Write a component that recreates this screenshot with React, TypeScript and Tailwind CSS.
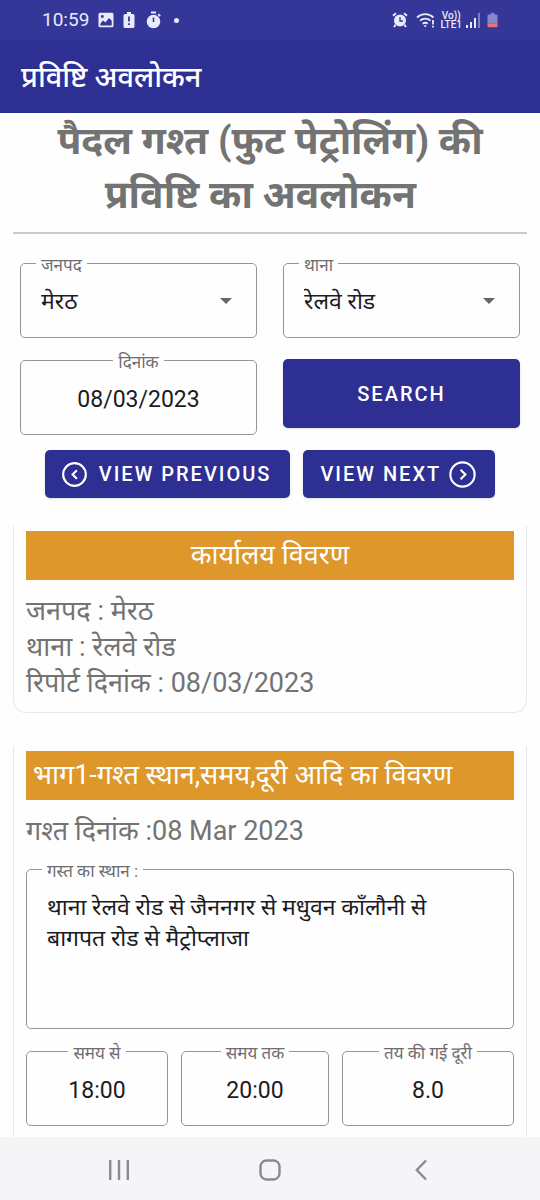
import type { ReactNode } from "react";

type OutlineProps = {
  id: string;
  label: string;
  centered?: boolean;
  children: ReactNode;
};

function Outline({ id, label, centered = false, children }: OutlineProps) {
  return (
    <fieldset className="relative min-w-0 rounded-[5px] border border-[#969498]">
      <legend
        className={
          centered
            ? "mx-auto h-4 px-[5px] text-[17px] leading-5 text-[#6f6d71]"
            : "ml-[15px] h-4 px-[5px] text-[17px] leading-5 text-[#6f6d71]"
        }
      >
        <label htmlFor={id}>{label}</label>
      </legend>
      {children}
    </fieldset>
  );
}

function SelectField({ id, label, value }: { id: string; label: string; value: string }) {
  return (
    <Outline id={id} label={label}>
      <select
        id={id}
        defaultValue={value}
        className="block h-[66px] w-full appearance-none bg-transparent pr-12 pb-1 pl-5 text-[23px] text-[#1c1b1f] outline-none"
      >
        <option value={value}>{value}</option>
      </select>
      <svg
        viewBox="0 0 12 6"
        className="pointer-events-none absolute top-[27px] right-6 h-[6px] w-3 fill-[#666]"
        aria-hidden="true"
      >
        <path d="M0 0h12L6 6z" />
      </svg>
    </Outline>
  );
}

function TextField({ id, label, value }: { id: string; label: string; value: string }) {
  return (
    <Outline id={id} label={label} centered>
      <input
        id={id}
        type="text"
        defaultValue={value}
        className="block h-[66px] w-full min-w-0 bg-transparent pb-1 text-center text-[23px] text-[#1c1b1f] outline-none"
      />
    </Outline>
  );
}

function StatusBar() {
  return (
    <div className="flex h-10 shrink-0 items-center justify-between bg-[#343698] px-[42px] text-[#e9eafc]">
      <div className="flex items-center">
        <span className="text-[19px]">10:59</span>
        <svg viewBox="0 0 16 16" className="ml-[9px] size-4" aria-hidden="true">
          <path
            fill="currentColor"
            fillRule="evenodd"
            d="M2 0.8h12a1.5 1.5 0 0 1 1.5 1.5v11.4a1.5 1.5 0 0 1-1.5 1.5H2a1.5 1.5 0 0 1-1.5-1.5V2.300A1.500 1.500 0 0 1 2 .8zM2.300 11.800v1.600h11.400V8.400L10.800 6 7.600 10.400 5 8.600zM3 3.200v2.600h2.600V3.200z"
          />
        </svg>
        <svg viewBox="0 0 12 16" className="ml-[9px] h-4 w-3" aria-hidden="true">
          <path fill="currentColor" d="M4 0h4v2h2a1.500 1.500 0 0 1 1.500 1.500v11A1.500 1.500 0 0 1 10 16H2a1.500 1.500 0 0 1-1.500-1.500v-11A1.500 1.500 0 0 1 2 2h2z" />
          <path stroke="#343698" strokeWidth="1.800" d="M6 4.500v5M6 11.300v1.800" />
        </svg>
        <svg viewBox="0 0 16 18" className="ml-[11px] h-[18px] w-4" aria-hidden="true">
          <circle cx="7.500" cy="10.500" r="6.800" fill="currentColor" />
          <path stroke="currentColor" strokeWidth="1.800" d="M5 1.500h5M12.200 3.200l2 2" fill="none" />
          <path stroke="#343698" strokeWidth="1.600" d="M7.500 6.500v4.500" />
        </svg>
        <span className="ml-3 size-[5px] rounded-full bg-[#e9eafc]" />
      </div>
      <div className="flex items-center">
        <svg viewBox="0 0 16 16" className="size-4" aria-hidden="true">
          <circle cx="8" cy="8.500" r="6" fill="currentColor" />
          <path stroke="currentColor" strokeWidth="2" fill="none" d="M1 3.800 4 1.200M15 3.800 12 1.200M3.500 12.800 2 15M12.500 12.800 14 15" />
          <path stroke="#343698" strokeWidth="1.300" fill="none" d="M8 5v4h3" />
        </svg>
        <svg viewBox="0 0 20 16" className="ml-2 h-4 w-5" fill="none" stroke="currentColor" strokeWidth="1.800" aria-hidden="true">
          <path d="M1 5.500a12 12 0 0 1 16.500 0M4 8.700a7.800 7.800 0 0 1 10.500 0M6.700 11.700a4 4 0 0 1 5 0" />
          <circle cx="9.200" cy="14" r="1.100" fill="currentColor" stroke="none" />
          <path d="M17 8v4.500M17 13.700v1.800" />
        </svg>
        <span className="ml-1 flex flex-col items-center text-[10px] leading-[9px] font-medium">
          <span>Vo))</span>
          <span>LTE1</span>
        </span>
        <svg viewBox="0 0 14 15" className="ml-1 h-[15px] w-[14px]" stroke="currentColor" strokeWidth="2" aria-hidden="true">
          <path d="M1 15v-3M5 15V9M9 15V5" />
          <path d="M13 15V0" opacity="0.400" />
        </svg>
        <svg viewBox="0 0 12 16" className="ml-[7px] h-4 w-[11px]" aria-hidden="true">
          <path fill="#8587c8" d="M4 0h4v2h2a1.500 1.500 0 0 1 1.500 1.500V12H.5V3.500A1.500 1.500 0 0 1 2 2h2z" />
          <path fill="#e8736f" d="M.5 12h11v2.500A1.500 1.500 0 0 1 10 16H2a1.500 1.500 0 0 1-1.500-1.500z" />
        </svg>
      </div>
    </div>
  );
}

const office = ["जनपद : मेरठ", "थाना : रेलवे रोड", "रिपोर्ट दिनांक : 08/03/2023"];

export default function App() {
  return (
    <div className="flex h-dvh flex-col bg-white font-[Roboto,'Noto_Sans_Devanagari','Noto_Sans',sans-serif]">
      <StatusBar />
      <header className="flex h-[73px] shrink-0 items-center bg-[#2d2f93] px-[21px]">
        <p className="text-[29px] leading-9 font-medium text-white">प्रविष्टि अवलोकन</p>
      </header>

      <main className="min-h-0 flex-1 overflow-y-auto bg-[#fefefe] px-[13px] pb-6 [scrollbar-width:none]">
        <h1 className="border-b-2 border-[#cbcbcb] pt-px pb-[10px] text-center text-[39px] leading-[54px] font-bold text-[#737373]">
          पैदल गश्त (फुट पेट्रोलिंग) की
          <br />
          प्रविष्टि का अवलोकन{"\u00a0\u00a0"}
        </h1>

        <form className="px-[7px] pt-[21px]" onSubmit={(e) => e.preventDefault()}>
          <div className="grid grid-cols-2 gap-x-[26px] gap-y-[14px]">
            <SelectField id="district" label="जनपद" value="मेरठ" />
            <SelectField id="station" label="थाना" value="रेलवे रोड" />
            <TextField id="date" label="दिनांक" value="08/03/2023" />
            <button
              type="submit"
              className="mt-[7px] h-[69px] rounded-[5px] bg-[#2d2f93] pt-px text-xl font-medium tracking-[2px] text-white shadow-sm"
            >
              SEARCH
            </button>
          </div>
          <div className="mt-[15px] flex justify-center gap-[13px]">
            <button
              type="button"
              className="flex h-12 items-center gap-3 rounded-[5px] bg-[#2d2f93] pr-[19px] pl-[17px] text-xl font-medium tracking-[2px] whitespace-nowrap text-white shadow-sm"
            >
              <svg viewBox="0 0 26 26" className="size-[25px]" fill="none" stroke="currentColor" strokeWidth="2.200" aria-hidden="true">
                <circle cx="13" cy="13" r="11.800" />
                <path d="M15.500 8.500 11 13l4.500 4.500" />
              </svg>
              VIEW PREVIOUS
            </button>
            <button
              type="button"
              className="flex h-12 items-center gap-2 rounded-[5px] bg-[#2d2f93] pr-[19px] pl-[17px] text-xl font-medium tracking-[2px] whitespace-nowrap text-white shadow-sm"
            >
              VIEW NEXT
              <svg viewBox="0 0 28 28" className="size-[27px]" fill="none" stroke="currentColor" strokeWidth="2.200" aria-hidden="true">
                <circle cx="14" cy="14" r="12.600" />
                <path d="M12 9l5 5-5 5" />
              </svg>
            </button>
          </div>
        </form>

        <section className="mt-7 rounded-b-[13px] border border-t-0 border-[#e9e7eb] px-3 pt-[5px] pb-[11px]">
          <h2 className="bg-[#dd972b] text-center text-[27px] leading-[49px] text-white">कार्यालय विवरण</h2>
          <div className="pt-[13px] text-[27px] leading-9 text-[#737373]">
            {office.map((line) => (
              <p key={line}>{line}</p>
            ))}
          </div>
        </section>

        <section className="mt-[33px] rounded-b-[13px] border border-t-0 border-[#e9e7eb] px-3 pt-[5px] pb-8">
          <h2 className="bg-[#dd972b] px-[7px] text-[27px] leading-[49px] whitespace-nowrap text-white">
            भाग1-गश्त स्थान,समय,दूरी आदि का विवरण
          </h2>
          <p className="pt-[13px] text-[27px] leading-9 text-[#737373]">गश्त दिनांक :08 Mar 2023</p>
          <div className="pt-3">
            <Outline id="place" label="गस्त का स्थान :">
              <textarea
                id="place"
                rows={4}
                defaultValue={"थाना रेलवे रोड से जैननगर से मधुवन काँलौनी से\nबागपत रोड से मैट्रोप्लाजा"}
                className="block h-[151px] w-full resize-none bg-transparent px-5 pt-[15px] text-[23px] leading-[31px] text-[#1c1b1f] outline-none"
              />
            </Outline>
          </div>
          <div className="mt-[14px] grid grid-cols-[142fr_148fr_172fr] gap-[13px]">
            <TextField id="from" label="समय से" value="18:00" />
            <TextField id="to" label="समय तक" value="20:00" />
            <TextField id="distance" label="तय की गई दूरी" value="8.0" />
          </div>
        </section>
      </main>

      <nav className="grid h-[63px] shrink-0 grid-cols-[repeat(3,151px)] items-center justify-center bg-[#f5f4f6] pt-[2px] text-[#8b898c]">
        <button type="button" aria-label="Recent apps" className="flex justify-center">
          <svg viewBox="0 0 20 22" className="h-[22px] w-5" stroke="currentColor" strokeWidth="2.400" aria-hidden="true">
            <path d="M1.200 1v20M10 1v20M18.800 1v20" />
          </svg>
        </button>
        <button type="button" aria-label="Home" className="flex justify-center">
          <svg viewBox="0 0 22 22" className="size-[22px]" fill="none" stroke="currentColor" strokeWidth="2.400" aria-hidden="true">
            <rect x="1.500" y="1.500" width="19" height="19" rx="6" />
          </svg>
        </button>
        <button type="button" aria-label="Back" className="flex justify-center">
          <svg viewBox="0 0 12 22" className="h-[22px] w-3" fill="none" stroke="currentColor" strokeWidth="2.400" aria-hidden="true">
            <path d="M11 1.500 1.800 11 11 20.500" />
          </svg>
        </button>
      </nav>
    </div>
  );
}
